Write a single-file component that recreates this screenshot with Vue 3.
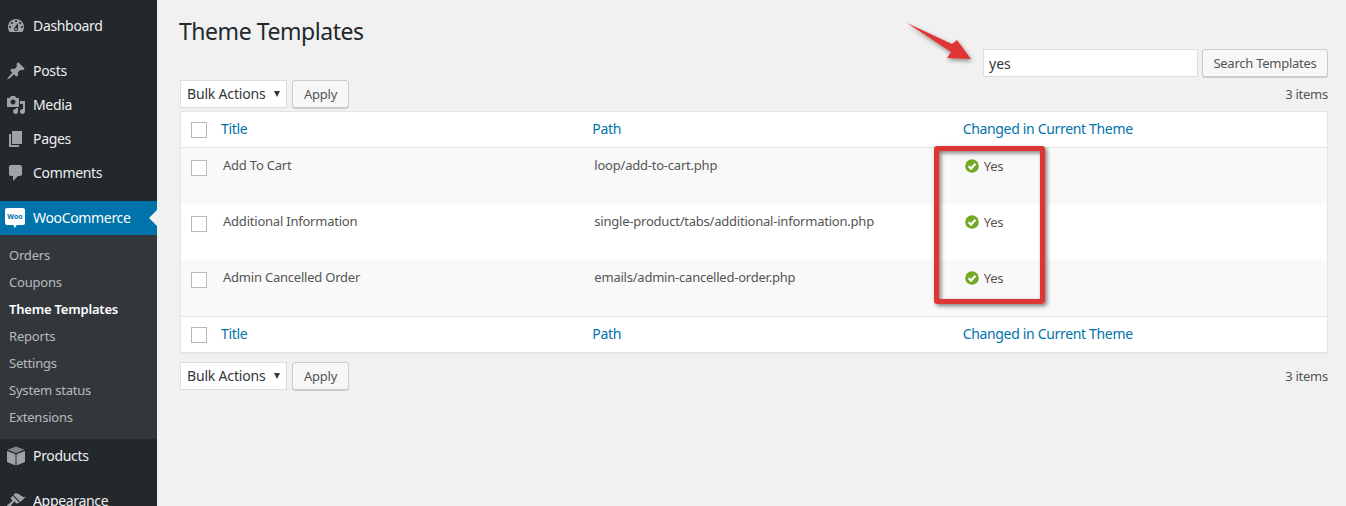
<script setup>
const topMenu = [
  { label: 'Dashboard', icon: 'dashboard' },
  { label: 'Posts', icon: 'post', gap: true },
  { label: 'Media', icon: 'media' },
  { label: 'Pages', icon: 'page' },
  { label: 'Comments', icon: 'comment' }
]
const subMenu = ['Orders', 'Coupons', 'Theme Templates', 'Reports', 'Settings', 'System status', 'Extensions']
const rows = [
  { title: 'Add To Cart', path: 'loop/add-to-cart.php' },
  { title: 'Additional Information', path: 'single-product/tabs/additional-information.php' },
  { title: 'Admin Cancelled Order', path: 'emails/admin-cancelled-order.php' }
]
const paths = {
  dashboard: 'M3.76 16h12.48c1.1-1.37 1.76-3.11 1.76-5 0-4.42-3.58-8-8-8s-8 3.58-8 8c0 1.89.66 3.63 1.76 5zM10 4c.55 0 1 .45 1 1s-.45 1-1 1-1-.45-1-1 .45-1 1-1zM6 6c.55 0 1 .45 1 1s-.45 1-1 1-1-.45-1-1 .45-1 1-1zm8 0c.55 0 1 .45 1 1s-.45 1-1 1-1-.45-1-1 .45-1 1-1zm-5.37 5.55L12 7v6c0 1.1-.9 2-2 2s-2-.9-2-2c0-.57.24-1.08.63-1.45zM4 10c.55 0 1 .45 1 1s-.45 1-1 1-1-.45-1-1 .45-1 1-1zm12 0c.55 0 1 .45 1 1s-.45 1-1 1-1-.45-1-1 .45-1 1-1zm-5 3c0-.55-.45-1-1-1s-1 .45-1 1 .45 1 1 1 1-.45 1-1z',
  post: 'M10.44 3.02l1.82-1.82 6.36 6.35-1.83 1.82c-1.05-.68-2.48-.57-3.41.36l-.75.75c-.92.93-1.04 2.35-.35 3.41l-1.83 1.82-2.41-2.41-2.8 2.79c-.42.42-3.38 2.71-3.8 2.29s1.86-3.39 2.28-3.81l2.79-2.79L4.1 9.36l1.83-1.82c1.05.69 2.48.57 3.4-.36l.75-.75c.93-.92 1.05-2.35.36-3.41z',
  media: 'M13 11V4c0-.55-.45-1-1-1h-1.67L9 1H5L3.67 3H2c-.55 0-1 .45-1 1v7c0 .55.45 1 1 1h10c.55 0 1-.45 1-1zM7 4.5c1.38 0 2.5 1.12 2.5 2.5S8.38 9.5 7 9.5 4.5 8.38 4.5 7 5.62 4.5 7 4.5zM14 6h5v10.5c0 1.38-1.12 2.5-2.5 2.5S14 17.88 14 16.5s1.12-2.5 2.5-2.5c.17 0 .34.02.5.05V9h-3V6zm-4 8.05V13h2v3.5c0 1.38-1.12 2.5-2.5 2.5S7 17.88 7 16.5 8.12 14 9.5 14c.17 0 .34.02.5.05z',
  page: 'M6 15V2h10v13H6zm-1 1h8v2H3V5h2v11z',
  comment: 'M5 2h9c1.1 0 2 .9 2 2v7c0 1.1-.9 2-2 2h-2l-5 5v-5H5c-1.1 0-2-.9-2-2V4c0-1.1.9-2 2-2z',
  brush: 'M14.48 11.06L7.41 3.99l1.5-1.5c.5-.56 2.3-.47 3.51.32 1.21.8 1.43 1.28 2.91 2.1 1.18.64 2.45 1.26 4.45.85zm-.71.71L6.7 4.7 4.93 6.47c-.39.39-.39 1.02 0 1.41l1.06 1.06c.39.39.39 1.03 0 1.42-.6.6-1.43 1.11-2.21 1.69-.35.26-.7.53-1.01.84C1.43 13.23.4 14.89 1.3 15.8c.9.91 2.57-.11 3.89-1.42.31-.31.58-.65.84-1.01.58-.78 1.09-1.61 1.69-2.21.39-.39 1.03-.39 1.42 0l1.06 1.06c.39.39 1.02.39 1.41 0z'
}
</script>

<template>
  <div class="page">
    <aside class="sidebar">
      <ul class="menu">
        <li v-for="item in topMenu" :key="item.label" class="item" :class="{ gap: item.gap }">
          <svg class="icon" viewBox="0 0 20 20"><path :d="paths[item.icon]" /></svg>
          <span>{{ item.label }}</span>
        </li>
        <li class="item current">
          <svg class="icon woo" viewBox="0 0 20 20">
            <path fill="#fff" d="M2 0h16a2 2 0 0 1 2 2v13a2 2 0 0 1-2 2h-6l-2.500 3-1-3H2a2 2 0 0 1-2-2V2a2 2 0 0 1 2-2z" />
            <text x="10" y="10.500" text-anchor="middle" class="woo-text">Woo</text>
          </svg>
          <span>WooCommerce</span>
        </li>
        <li class="submenu">
          <ul>
            <li v-for="sub in subMenu" :key="sub" class="sub" :class="{ active: sub === 'Theme Templates' }">{{ sub }}</li>
          </ul>
        </li>
        <li class="item">
          <svg class="icon" viewBox="0 0 20 20">
            <path d="M10 0.500l8.500 3.300-8.500 3.400-8.500-3.400z" opacity="0.75" />
            <path d="M1 5l8.500 3.300v11.200l-8.500-3.500z" />
            <path d="M19 5l-8.500 3.300v11.200l8.500-3.500z" />
          </svg>
          <span>Products</span>
        </li>
        <li class="item gap">
          <svg class="icon" viewBox="0 0 20 20"><path :d="paths.brush" /></svg>
          <span>Appearance</span>
        </li>
      </ul>
    </aside>

    <main class="content">
      <h1>Theme Templates</h1>
      <div class="search">
        <input class="search-input" value="yes" />
        <button class="btn search-btn">Search Templates</button>
      </div>

      <div class="tablenav top">
        <div class="actions">
          <div class="select">Bulk Actions</div>
          <button class="btn">Apply</button>
        </div>
        <span class="count">3 items</span>
      </div>

      <table class="list">
        <thead>
          <tr>
            <th class="cb"><input type="checkbox" /></th>
            <th><a>Title</a></th>
            <th><a>Path</a></th>
            <th><a>Changed in Current Theme</a></th>
          </tr>
        </thead>
        <tbody>
          <tr v-for="row in rows" :key="row.path">
            <td class="cb"><input type="checkbox" /></td>
            <td>{{ row.title }}</td>
            <td>{{ row.path }}</td>
            <td>
              <div class="yes">
                <svg class="check" viewBox="0 0 14 14">
                  <circle cx="7" cy="7" r="6.800" fill="#73a724" />
                  <path d="M3.600 7.200l2.400 2.400 4.400-4.800" fill="none" stroke="#fff" stroke-width="2.200" />
                </svg>
                <span>Yes</span>
              </div>
            </td>
          </tr>
        </tbody>
        <tfoot>
          <tr>
            <th class="cb"><input type="checkbox" /></th>
            <th><a>Title</a></th>
            <th><a>Path</a></th>
            <th><a>Changed in Current Theme</a></th>
          </tr>
        </tfoot>
      </table>

      <div class="tablenav bottom">
        <div class="actions">
          <div class="select">Bulk Actions</div>
          <button class="btn">Apply</button>
        </div>
        <span class="count">3 items</span>
      </div>
    </main>

    <!-- screenshot annotations -->
    <svg class="arrow" viewBox="0 0 90 60" width="90" height="60">
      <defs>
        <filter id="arrow-shadow" x="-20%" y="-20%" width="140%" height="150%">
          <feDropShadow dx="1" dy="2" stdDeviation="2" flood-color="#000" flood-opacity="0.45" />
        </filter>
      </defs>
      <polygon points="7,3 52,24 57,20 71,39 47,38 51,32" fill="#e03535" filter="url(#arrow-shadow)" />
    </svg>
    <div class="redbox"></div>
  </div>
</template>

<style scoped>
.page {
  position: relative;
  display: flex;
  height: 100vh;
  overflow: hidden;
  background: #f1f1f1;
  font-family: "Noto Sans", sans-serif;
  font-size: 13px;
  color: #444;
}

ul {
  list-style: none;
  margin: 0;
  padding: 0;
}

.sidebar {
  width: 157px;
  flex: none;
  background: #23282d;
}

.menu {
  padding-top: 9px;
}

.item {
  position: relative;
  display: flex;
  align-items: center;
  height: 34px;
  color: #eee;
  font-size: 14px;
  letter-spacing: -0.33px;
}

.item.gap {
  margin-top: 11px;
}

.item .icon {
  position: absolute;
  left: 6px;
  top: 7px;
  width: 20px;
  height: 20px;
  fill: #9ea3a8;
}

.item span {
  margin-left: 33px;
  padding-bottom: 2px;
}

.item.current {
  margin-top: 11px;
  background: #0073aa;
  color: #fff;
}

.item.current::after {
  content: "";
  position: absolute;
  right: 0;
  top: 9px;
  border: 8px solid transparent;
  border-left: 0;
  border-right-color: #f1f1f1;
}

.item .woo {
  left: 5px;
}

.woo-text {
  font-family: "Noto Sans", sans-serif;
  font-size: 7px;
  font-weight: 700;
  letter-spacing: 0;
  fill: #0073aa;
}

.submenu {
  background: #32373c;
  padding: 7px 0 8px;
}

.sub {
  height: 27px;
  line-height: 27px;
  padding-left: 9px;
  font-size: 13px;
  letter-spacing: -0.2px;
  color: rgba(240, 245, 250, 0.7);
}

.sub.active {
  color: #fff;
  font-weight: 600;
}

.content {
  flex: 1;
  min-width: 0;
  padding: 0 18px 0 23px;
}

h1 {
  margin: 0 0 5px -1px;
  padding-top: 18px;
  font-size: 23px;
  font-weight: 400;
  line-height: 26px;
  letter-spacing: -0.45px;
  color: #23282d;
}

.search {
  display: flex;
  justify-content: flex-end;
  gap: 4px;
  height: 28px;
  margin-bottom: 3px;
}

.search-input {
  width: 215px;
  box-sizing: border-box;
  padding: 0 5px;
  border: 1px solid #ddd;
  background: #fff;
  font: 14px "Noto Sans", sans-serif;
  color: #32373c;
  outline: none;
}

.btn {
  box-sizing: border-box;
  height: 28px;
  padding: 0 11px;
  border: 1px solid #ccc;
  border-radius: 3px;
  background: #f7f7f7;
  box-shadow: 0 1px 0 #ccc;
  font: 13px "Noto Sans", sans-serif;
  letter-spacing: -0.25px;
  color: #555;
}

.search-btn {
  width: 126px;
  padding: 0;
}

.tablenav {
  display: flex;
  justify-content: space-between;
  align-items: flex-start;
}

.tablenav.top {
  height: 31px;
}

.tablenav.bottom {
  margin-top: 9px;
}

.actions {
  display: flex;
  gap: 5px;
}

.select {
  position: relative;
  box-sizing: border-box;
  width: 107px;
  height: 28px;
  line-height: 26px;
  padding-left: 6px;
  border: 1px solid #ddd;
  background: #fff;
  font-size: 14px;
  letter-spacing: -0.18px;
  color: #32373c;
}

.select::after {
  content: "";
  position: absolute;
  right: 6px;
  top: 10px;
  border: 3px solid transparent;
  border-bottom: 0;
  border-top: 6px solid #32373c;
}

.count {
  line-height: 28px;
  font-size: 13px;
  letter-spacing: -0.25px;
  color: #555;
}

.list {
  width: 100%;
  table-layout: fixed;
  border-collapse: separate;
  border-spacing: 0;
  border: 1px solid #e5e5e5;
  box-shadow: 0 1px 1px rgba(0, 0, 0, 0.04);
  background: #fff;
}

.list th {
  height: 36px;
  box-sizing: border-box;
  padding: 0 8px 2px;
  text-align: left;
  font-size: 14px;
  font-weight: 400;
  letter-spacing: -0.33px;
}

.list th:nth-child(4) {
  padding-left: 7px;
}

.list thead th {
  border-bottom: 1px solid #e1e1e1;
}

.list tfoot th {
  border-top: 1px solid #e1e1e1;
}

.list a {
  color: #0073aa;
}

.list td {
  height: 56px;
  box-sizing: border-box;
  padding: 8px 10px;
  vertical-align: top;
  line-height: 19px;
  font-size: 13px;
  letter-spacing: -0.22px;
  color: #555;
}

.list th.cb,
.list td.cb {
  width: 32px;
  padding: 0 0 0 10px;
}

.list td.cb {
  padding-top: 12px;
}

.list tbody tr:nth-child(odd) {
  background: #f9f9f9;
}

.list input[type="checkbox"] {
  appearance: none;
  display: block;
  width: 16px;
  height: 16px;
  margin: 0;
  border: 1px solid #b4b9be;
  background: #fff;
}

.yes {
  display: flex;
  align-items: flex-start;
  gap: 5px;
  margin-left: -1px;
  line-height: 21px;
}

.check {
  width: 14px;
  height: 14px;
  margin-top: 3px;
}

.arrow {
  position: absolute;
  left: 900px;
  top: 20px;
}

.redbox {
  position: absolute;
  left: 934px;
  top: 146px;
  width: 111px;
  height: 158px;
  box-sizing: border-box;
  border: 5px solid #de3535;
  border-radius: 3px;
  box-shadow: 2px 2px 4px rgba(0, 0, 0, 0.5), inset 2px 2px 4px rgba(0, 0, 0, 0.5);
}
</style>
